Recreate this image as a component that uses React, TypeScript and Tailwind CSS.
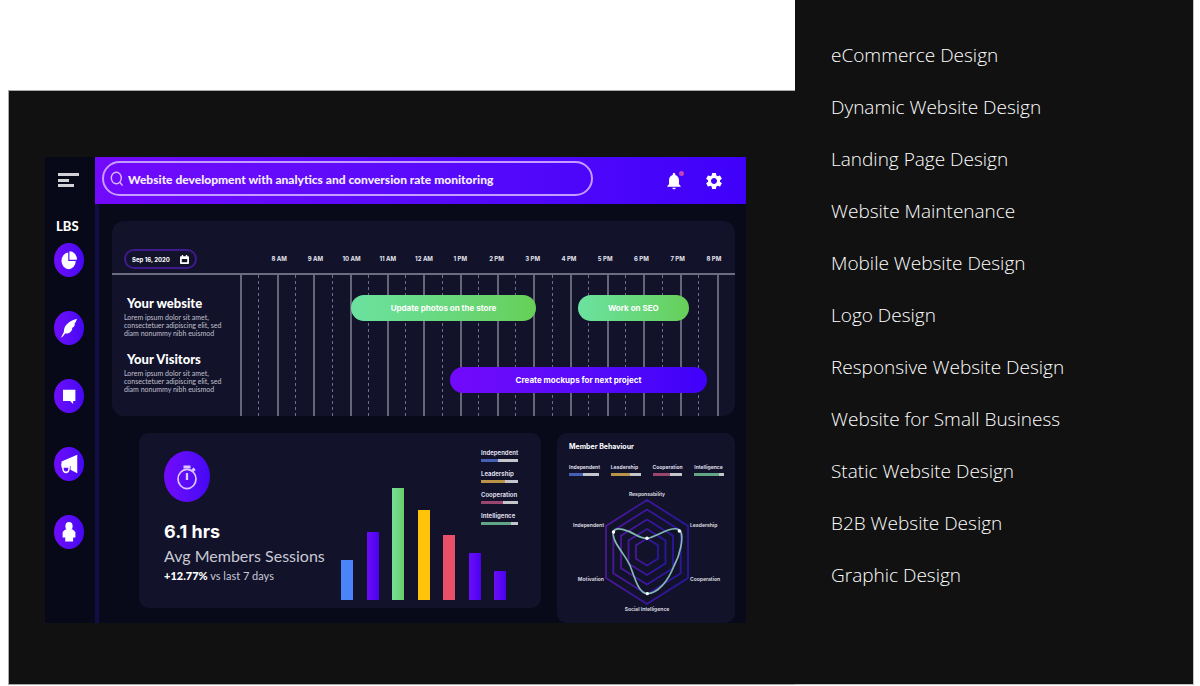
import React from "react";
import { MdNotifications, MdSettings } from "react-icons/md";

const services = [
  "eCommerce Design",
  "Dynamic Website Design",
  "Landing Page Design",
  "Website Maintenance",
  "Mobile Website Design",
  "Logo Design",
  "Responsive Website Design",
  "Website for Small Business",
  "Static Website Design",
  "B2B Website Design",
  "Graphic Design",
];

const hours = ["8 AM", "9 AM", "10 AM", "11 AM", "12 AM", "1 PM", "2 PM", "3 PM", "4 PM", "5 PM", "6 PM", "7 PM", "8 PM"];

const bars = [
  { height: 40, color: "bg-[#4b83fa]" },
  { height: 68, color: "bg-linear-to-r from-[#6b0cf8] to-[#4a00f0]" },
  { height: 112, color: "bg-linear-to-r from-[#79dd9a] to-[#66cf66]" },
  { height: 90, color: "bg-[#ffc40a]" },
  { height: 65, color: "bg-[#e8506a]" },
  { height: 47, color: "bg-linear-to-r from-[#6b0cf8] to-[#4a00f0]" },
  { height: 29, color: "bg-linear-to-r from-[#6b0cf8] to-[#4a00f0]" },
];

const skills = [
  { name: "Independent", share: 47, color: "bg-[#4460b4]" },
  { name: "Leadership", share: 65, color: "bg-[#b99448]" },
  { name: "Cooperation", share: 59, color: "bg-[#9a456f]" },
  { name: "Intelligence", share: 82, color: "bg-[#5fa586]" },
];

function Skill({ name, share, color }: { name: string; share: number; color: string }) {
  return (
    <li className="flex flex-col">
      <span className="whitespace-nowrap leading-3 font-bold text-[#dcdce6]">{name}</span>
      <span className="flex h-[3px] bg-[#c4c4cb]">
        <span className={color} style={{ width: `${share}%` }} />
      </span>
    </li>
  );
}

const navIcons = [
  {
    label: "Reports",
    art: (
      <>
        <path d="M11 3A9.500 10 0 1 0 21 13.200H11Z" />
        <path d="M12.600 1.500V11.600H22.600A10 10 0 0 0 12.600 1.500Z" />
      </>
    ),
  },
  {
    label: "Writing",
    art: <path d="M22.500 1C15 3 7 7 5.500 13.500L5 17 1.500 23 2.800 23 7 18.500C13 18.800 15.500 16 16.500 12.800L15.500 12.200 18.500 10.500 20 7.500 19 7.200C20.500 6 22 3.500 22.500 1Z" />,
  },
  {
    label: "Messages",
    art: <path d="M4 4.500H20.500V18H17.500V21.500L13.500 18H4Z" />,
  },
  {
    label: "Campaigns",
    art: (
      <>
        <path d="M2 9 23 1V23L14 19V14.500H2Z" />
        <path d="M2 12V16.500H13V12Z" />
        <path d="M4 15V18A4 4 0 0 0 12 18V15" fill="none" stroke="white" strokeWidth="2" />
      </>
    ),
  },
  {
    label: "Members",
    art: (
      <>
        <ellipse cx="12" cy="5" rx="4.800" ry="5" />
        <path d="M7 9H17L20.500 12V18.500H17.500V23.500H7V18.500H3.500V12Z" />
      </>
    ),
  },
];

function Sidebar() {
  return (
    <aside className="flex w-[50px] shrink-0 flex-col bg-[#070818]">
      <button aria-label="Menu" className="ml-[13px] mt-4 flex h-[14px] flex-col justify-between">
        <span className="h-[3px] w-[21px] bg-[#d2d2d6]" />
        <span className="h-[3px] w-[11px] bg-[#d2d2d6]" />
        <span className="h-[3px] w-4 bg-[#d2d2d6]" />
      </button>
      <p className="mt-[29px] pl-[11px] font-['Lato'] text-[13px] leading-5 font-black text-white">LBS</p>
      <nav className="mt-[7px] flex flex-col items-center gap-[34px] pr-[2px]">
        {navIcons.map(({ label, art }) => (
          <a
            key={label}
            href="#"
            aria-label={label}
            className="flex h-[34px] w-[30px] items-center justify-center rounded-[50%] bg-linear-to-r from-[#6f0bfa] to-[#4507f5]"
          >
            <svg viewBox="0 0 24 24" className="h-5 w-[18px] fill-white" preserveAspectRatio="none">
              {art}
            </svg>
          </a>
        ))}
      </nav>
    </aside>
  );
}

function TopBar() {
  return (
    <header className="flex h-[47px] shrink-0 items-center bg-linear-to-r from-[#7209fb] to-[#3f00fa] pl-[7px] pr-[22px]">
      <label className="mb-1 flex h-[35px] w-[79%] items-center gap-1 rounded-full border-2 border-[#c59cff] pl-[6px]">
        <svg viewBox="0 0 14 16" className="h-4 w-[14px] shrink-0" fill="none" stroke="#d6baff" strokeWidth="1.400">
          <ellipse cx="6.300" cy="7" rx="5" ry="5.800" />
          <path d="M9.800 11.300 12.600 14.600" />
        </svg>
        <input
          aria-label="Search"
          defaultValue="Website development with analytics and conversion rate monitoring"
          className="min-w-0 flex-1 bg-transparent pt-[2px] font-['Lato'] text-[12px] font-black text-[#f4eeff] outline-none"
        />
      </label>
      <div className="ml-auto flex items-center gap-5">
        <button aria-label="Notifications" className="relative">
          <MdNotifications className="size-5 text-white" />
          <span className="absolute right-0 top-0 size-[5px] rounded-full bg-[#c147b8]" />
        </button>
        <button aria-label="Settings">
          <MdSettings className="size-5 text-white" />
        </button>
      </div>
    </header>
  );
}

function Task({ title, className }: { title: string; className: string }) {
  return (
    <article className={`flex h-[26px] items-center justify-center rounded-full font-bold text-[8px] text-white ${className}`}>
      {title}
    </article>
  );
}

function Project({ title }: { title: string }) {
  return (
    <div>
      <h2 className="pl-[3px] font-['Lato'] text-[13px] leading-4 font-black text-white">{title}</h2>
      <p className="mt-[2px] whitespace-nowrap font-['Lato'] text-[7px] leading-2 text-[#c0c0cc]">
        Lorem ipsum dolor sit amet,
        <br />
        consectetuer adipiscing elit, sed
        <br />
        diam nonummy nibh euismod
      </p>
    </div>
  );
}

function Schedule() {
  return (
    <section className="overflow-hidden rounded-xl bg-[#12122b]">
      <div className="flex h-[54px] items-end border-b-2 border-[#6c6b80] pb-1">
        <div className="w-[149px] shrink-0 pl-3">
          <button className="flex h-5 w-[73px] items-center justify-between rounded-full border-2 border-[#3f1a8c] px-[6px] text-[6px] font-bold text-white">
            Sep 16, 2020
            <svg viewBox="0 0 10 10" className="size-[9px]">
              <path d="M2 0h1.500v1.500h3V0H8v1.500h1A1 1 0 0 1 10 2.500V9a1 1 0 0 1-1 1H1A1 1 0 0 1 0 9V2.500a1 1 0 0 1 1-1h1ZM2 4.500V8H8V4.500Z" fill="white" />
            </svg>
          </button>
        </div>
        <ol className="grid flex-1 grid-cols-[repeat(13,minmax(0,1fr))] pr-[3px] text-center text-[6px] leading-5 font-bold text-[#e6e6ee]">
          {hours.map((hour) => (
            <li key={hour} className="whitespace-nowrap">
              {hour}
            </li>
          ))}
        </ol>
      </div>
      <div className="flex h-[141px]">
        <div className="flex w-32 shrink-0 flex-col gap-[14px] pl-3 pt-5">
          <Project title="Your website" />
          <Project title="Your Visitors" />
        </div>
        <div className="relative flex-1">
          <div aria-hidden="true" className="absolute inset-0 grid grid-cols-[repeat(27,minmax(0,1fr))]">
            {Array.from({ length: 27 }, (_, i) => (
              <span
                key={i}
                className={
                  i % 2 === 0
                    ? "border-l-2 border-[#66657a]"
                    : "bg-[repeating-linear-gradient(to_bottom,#6f6e82_0px,#6f6e82_3px,transparent_3px,transparent_6px)] bg-[length:1px_100%] bg-no-repeat"
                }
              />
            ))}
          </div>
          <div className="relative flex flex-col gap-[46px] pt-5">
            <div className="flex pl-[22.5%]">
              <Task title="Update photos on the store" className="w-[48%] bg-linear-to-r from-[#6be2a0] to-[#67cf58]" />
              <Task title="Work on SEO" className="ml-[11%] w-[29%] bg-linear-to-r from-[#6be2a0] to-[#67cf58]" />
            </div>
            <div className="flex pl-[42.5%]">
              <Task title="Create mockups for next project" className="w-[90%] bg-linear-to-r from-[#7209fb] to-[#3f00fa]" />
            </div>
          </div>
        </div>
      </div>
    </section>
  );
}

function Sessions() {
  return (
    <section className="flex h-[175px] flex-1 rounded-[10px] bg-[#12122b] pl-[25px] pr-[23px]">
      <div className="min-w-0 flex-1 whitespace-nowrap pt-[18px] text-[#c9c9d3]">
        <div className="flex h-[51px] w-[46px] items-center justify-center rounded-[50%] bg-linear-to-r from-[#7209fb] to-[#4507f5]">
          <svg viewBox="0 0 22 26" className="h-[26px] w-[22px]" fill="none" stroke="#dcc6ff" strokeWidth="1.700">
            <ellipse cx="11" cy="15" rx="9" ry="9.600" />
            <path d="M7.500 3H14.500M16.500 4.500 18.500 7" strokeWidth="3" />
            <path d="M11 9V16" strokeWidth="2.300" />
          </svg>
        </div>
        <p className="mt-[18px] text-[18px] leading-6 font-bold text-white">6.1 hrs</p>
        <p className="font-['Lato'] text-[16px] leading-6">Avg Members Sessions</p>
        <p className="font-['Lato'] text-[11px] leading-4">
          <strong className="font-black text-white">+12.77%</strong> vs last 7 days
        </p>
      </div>
      <div className="grid w-[177px] shrink-0">
        <div className="flex items-end justify-between pb-2 pr-3 [grid-area:1/1]">
          {bars.map(({ height, color }, i) => (
            <span key={i} className={`w-3 ${color}`} style={{ height }} />
          ))}
        </div>
        <ul className="flex w-[37px] flex-col gap-[6px] justify-self-end pt-[14px] text-[6px] [grid-area:1/1]">
          {skills.map((skill) => (
            <Skill key={skill.name} {...skill} />
          ))}
        </ul>
      </div>
    </section>
  );
}

const rings = [
  [41, 52],
  [33.7, 42.5],
  [26, 32.5],
  [18.5, 23],
  [11, 13.5],
];

function Behaviour() {
  return (
    <section className="flex h-[190px] w-[178px] shrink-0 flex-col rounded-[10px] bg-[#12122b] pt-2">
      <h2 className="pl-3 text-[7px] leading-3 font-bold text-white">Member Behaviour</h2>
      <ul className="mt-2 grid grid-cols-4 gap-3 pl-3 pr-[11px] text-[5px]">
        {skills.map((skill) => (
          <Skill key={skill.name} {...skill} />
        ))}
      </ul>
      <svg viewBox="0 0 178 126" className="mt-[14px] h-[126px] w-full shrink-0" role="img" aria-label="Member behaviour radar">
        <defs>
          <linearGradient id="ring" x1="0" x2="1">
            <stop offset="0" stopColor="#4a1799" />
            <stop offset="1" stopColor="#2b169e" />
          </linearGradient>
        </defs>
        <g fill="none" stroke="url(#ring)" strokeWidth="1.800">
          {rings.map(([w, h]) => (
            <polygon
              key={w}
              points={`90,${62 - h} ${90 + w},${62 - h / 2} ${90 + w},${62 + h / 2} 90,${62 + h} ${90 - w},${62 + h / 2} ${90 - w},${62 - h / 2}`}
            />
          ))}
        </g>
        <path
          d="M56.300 42.300C58 35 72 41 78 44.500C84 48 88 48.300 90 48.300C93 48.300 97 46 102 44C110 40 120 36 123.500 41C127 48 123 65 117 76C111 91 101 103.600 90.300 103.600C82 103.600 78 89 74 78C70 66 55 53 56.300 42.300Z"
          fill="none"
          stroke="#82b9b0"
          strokeWidth="1.700"
        />
        <g fill="#fff">
          <circle cx="56.500" cy="42" r="1.700" />
          <circle cx="90" cy="48.300" r="1.700" />
          <circle cx="122.300" cy="41" r="1.700" />
          <circle cx="90.300" cy="103.600" r="1.700" />
        </g>
        <g className="fill-[#d2d2dd] text-[5px] font-bold">
          <text x="90" y="6" textAnchor="middle">Responsability</text>
          <text x="47" y="37" textAnchor="end">Independent</text>
          <text x="133" y="37">Leadership</text>
          <text x="47" y="91" textAnchor="end">Motivation</text>
          <text x="133" y="91">Cooperation</text>
          <text x="90" y="121" textAnchor="middle">Social Intelligence</text>
        </g>
      </svg>
    </section>
  );
}

export default function App() {
  return (
    <div className="flex bg-white pb-[1px] pl-2 pr-[6px] font-['Inter',sans-serif]">
      <main className="flex min-w-0 flex-1 flex-col pt-[90px]">
        <div className="flex-1 border-b border-l border-t border-[#a8aaaa] bg-[#111111] pb-[61px] pl-9 pr-[49px] pt-[66px]">
          <div className="flex bg-[#080a19]">
            <Sidebar />
            <div className="flex min-w-0 flex-1 flex-col">
              <TopBar />
              <div className="flex-1 border-l-4 border-[#130d45] pl-[13px] pr-[11px] pt-[17px]">
                <Schedule />
                <div className="mt-[17px] flex items-start gap-4 pl-[27px]">
                  <Sessions />
                  <Behaviour />
                </div>
              </div>
            </div>
          </div>
        </div>
      </main>
      <aside className="w-[399px] shrink-0 border-b border-r border-[#c4c4c4] bg-[#111111] pl-9 pt-[43px]">
        <ul className="flex flex-col gap-7 font-['Open_Sans',sans-serif] text-[19px] leading-6 font-light text-white">
          {services.map((service) => (
            <li key={service}>
              <a href="#">{service}</a>
            </li>
          ))}
        </ul>
      </aside>
    </div>
  );
}
